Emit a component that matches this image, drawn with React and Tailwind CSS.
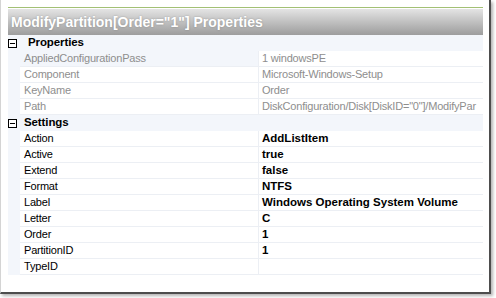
const readOnly = [
  ["AppliedConfigurationPass", "1 windowsPE"],
  ["Component", "Microsoft-Windows-Setup"],
  ["KeyName", "Order"],
  ["Path", 'DiskConfiguration/Disk[DiskID="0"]/ModifyPar'],
];

const settings = [
  ["Action", "AddListItem"],
  ["Active", "true"],
  ["Extend", "false"],
  ["Format", "NTFS"],
  ["Label", "Windows Operating System Volume"],
  ["Letter", "C"],
  ["Order", "1"],
  ["PartitionID", "1"],
  ["TypeID", ""],
];

function Collapse() {
  return (
    <span className="w-[9px] h-[9px] border border-black bg-white flex items-center justify-center shrink-0">
      <span className="w-[5px] h-px bg-black" />
    </span>
  );
}

function Category({ label, gap }) {
  return (
    <div className="h-4 flex items-center bg-[#f3f6fb]">
      <Collapse />
      <span className={`${gap} text-[11.5px] font-bold text-black tracking-[-0.1px]`}>{label}</span>
    </div>
  );
}

function Row({ name, value, muted, first }) {
  return (
    <div className="h-4 flex">
      <div className="w-3 bg-[#f3f6fb] shrink-0" />
      <div
        className={`w-[239px] shrink-0 border-b border-r border-[#eceff4] pl-1 flex items-center text-[11px] tracking-[-0.2px] ${
          first ? "bg-[#f3f6fb]" : "bg-white"
        } ${muted ? "text-[#8e8e8e]" : "text-black"}`}
      >
        {name}
      </div>
      <div
        className={`flex-1 min-w-0 border-b border-[#eceff4] pl-[3px] flex items-center overflow-hidden whitespace-nowrap bg-white ${
          muted ? "text-[11px] tracking-[-0.2px] text-[#8e8e8e]" : "text-[11.5px] font-bold text-black"
        }`}
      >
        {value}
      </div>
    </div>
  );
}

export default function App() {
  return (
    <div
      className="w-[496px] h-[298px] bg-white overflow-hidden"
      style={{ fontFamily: '"Liberation Sans", Arial, sans-serif' }}
    >
      <div className="w-[491px] h-[294px] bg-white border-l border-[#d4d4d4] border-r-2 border-b-2 border-r-[#4d4d4d] border-b-[#4d4d4d] shadow-[2px_2px_3px_rgba(0,0,0,0.3)] pl-[7px] pt-[7px]">
        <div className="w-[475px]">
          <div className="h-px bg-[#a3c075]" />
          <div className="h-[26px] mt-px bg-gradient-to-b from-[#e4e4e4] to-[#9d9d9d] flex items-center pl-[3px]">
            <span className="text-[14px] font-bold text-white whitespace-nowrap [text-shadow:0_0_2px_rgba(0,0,0,0.25)]">
              ModifyPartition[Order="1"] Properties
            </span>
          </div>

          <Category label="Properties" gap="ml-[11px]" />
          {readOnly.map(([n, v], i) => (
            <Row key={n} name={n} value={v} muted first={i === 0} />
          ))}

          <Category label="Settings" gap="ml-[7px]" />
          {settings.map(([n, v]) => (
            <Row key={n} name={n} value={v} />
          ))}
        </div>
      </div>
    </div>
  );
}
